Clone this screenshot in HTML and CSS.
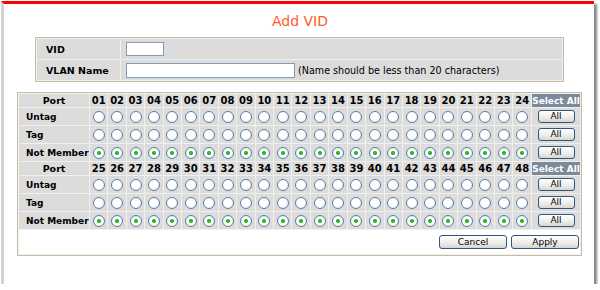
FILE: index.html
```html
<!DOCTYPE html>
<html lang="en">
<head>
    <meta charset="UTF-8">
    <title>Add VID</title>
    <link rel="stylesheet" href="styles.css">
</head>
<body>
    <div class="frame">
        <div class="title">Add VID</div>

        <table class="vid-table">
            <tr>
                <td class="label">VID</td>
                <td><input type="text" class="vid-input"></td>
            </tr>
            <tr>
                <td class="label">VLAN Name</td>
                <td><input type="text" class="name-input"><span class="note">(Name should be less than 20 characters)</span></td>
            </tr>
        </table>

        <table class="port-table" id="ports"></table>
    </div>

    <script>
        const table = document.getElementById('ports');
        const rows = ['Untag', 'Tag', 'Not Member'];
        let html = '';

        // two blocks of 24 ports
        for (let block = 0; block < 2; block++) {
            html += '<tr class="head"><td class="label center">Port</td>';
            for (let i = 1; i <= 24; i++) {
                const n = block * 24 + i;
                html += '<td class="num">' + (n < 10 ? '0' + n : n) + '</td>';
            }
            html += '<td class="select-all">Select All</td></tr>';

            rows.forEach((name) => {
                const on = name === 'Not Member' ? ' on' : '';
                html += '<tr class="row"><td class="label">' + name + '</td>';
                for (let i = 0; i < 24; i++) {
                    html += '<td class="cell"><span class="radio' + on + '"></span></td>';
                }
                html += '<td class="cell"><button class="btn all-btn">All</button></td></tr>';
            });
        }

        html += '<tr><td colspan="26" class="actions"><button class="btn act-btn">Cancel</button><button class="btn act-btn">Apply</button></td></tr>';
        table.innerHTML = html;
    </script>
</body>
</html>
```

FILE: styles.css
```css
* {
    margin: 0;
    padding: 0;
    box-sizing: border-box;
}

body {
    background: #fff;
    font-family: 'DejaVu Sans', Verdana, sans-serif;
    color: #000;
}

.frame {
    width: 593px;
    height: 283px;
    margin: 1px 0 0 1px;
    padding-top: 7px;
    background: #fff;
    border-top: 3px solid #ff0000;
    border-left: 3px solid #d4d4d4;
    box-shadow: 3px 3px 2px #8a8a8a;
}

.title {
    text-align: center;
    color: #ff5a28;
    font-size: 14px;
    line-height: 20px;
    padding-left: 2px;
}

table {
    border-collapse: separate;
    border-spacing: 1px;
    background: #f1f0ea;
    border: 1px solid #c3bea8;
}

td {
    background: #dcdcdc;
    font-size: 9.5px;
    padding: 0;
}

.label {
    font-weight: bold;
    padding-left: 9px;
    text-align: left;
}

.label.center {
    text-align: center;
    padding-left: 0;
}

.vid-table {
    width: 529px;
    margin: 6px 0 0 31px;
}

.vid-table td {
    height: 20px;
}

.vid-table .label {
    width: 83px;
}

.vid-table td:last-child {
    padding-left: 5px;
}

input {
    height: 14px;
    border: 1px solid #7f9db9;
    background: #fff;
    vertical-align: middle;
}

.vid-input {
    width: 38px;
}

.name-input {
    width: 169px;
    height: 15px;
}

.note {
    margin-left: 3px;
    vertical-align: middle;
    font-size: 9.6px;
}

.port-table {
    width: 565px;
    margin: 10px 0 0 13px;
    table-layout: fixed;
}

.port-table .label {
    width: 70px;
    padding-left: 7px;
    font-size: 9px;
}

.port-table .label.center {
    padding-left: 0;
    font-size: 9.5px;
}

.head td {
    height: 13px;
    line-height: 12px;
}

.num {
    text-align: center;
    font-weight: bold;
    font-size: 10px;
}

.select-all {
    width: 48px;
    background: #7a899c;
    color: #fff;
    font-weight: bold;
    text-align: center;
    white-space: nowrap;
    font-size: 9px;
}

.row td {
    height: 17px;
}

.cell {
    text-align: center;
    vertical-align: middle;
}

.radio {
    display: inline-block;
    width: 12px;
    height: 12px;
    border: 1px solid #5b7ea7;
    border-radius: 50%;
    background: radial-gradient(circle at 40% 40%, #fff 0%, #fff 45%, #dfe3e8 100%);
    vertical-align: middle;
}

.radio.on {
    background: radial-gradient(circle, #22c022 0, #22c022 1.6px, #fff 2.4px, #fff 45%, #dfe3e8 100%);
}

.btn {
    font-family: 'DejaVu Sans', Verdana, sans-serif;
    font-size: 9px;
    color: #000;
    border: 1px solid #35567c;
    border-radius: 3px;
    background: linear-gradient(#ffffff, #ecece8 60%, #d6d6d0);
    vertical-align: middle;
}

.all-btn {
    width: 37px;
    height: 13px;
    line-height: 11px;
}

.actions {
    background: #fff;
    height: 24px;
    text-align: right;
    padding-right: 1px;
}

.act-btn {
    width: 68px;
    height: 14px;
    line-height: 12px;
    margin-left: 4px;
}
```
